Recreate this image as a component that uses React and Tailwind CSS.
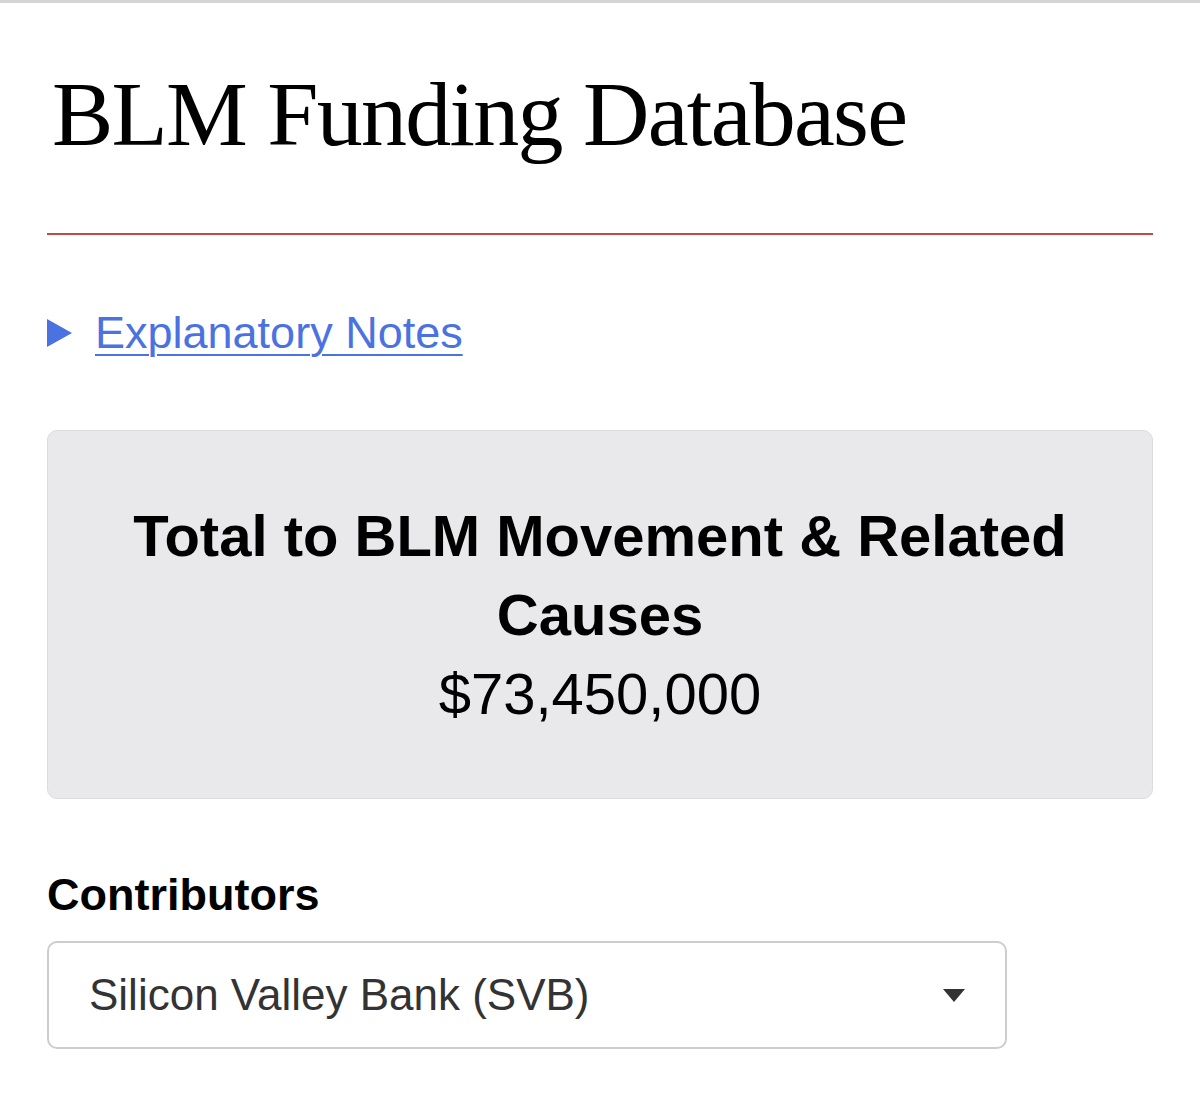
import React from "react";

// Funding page: title, notes toggle, total summary and contributor picker
const sans = { fontFamily: '"Liberation Sans", Arial, sans-serif' };
const serif = { fontFamily: '"Liberation Serif", "Times New Roman", serif' };

function SummaryBox({ label, amount }) {
  return (
    <div className="rounded-[10px] border border-[#dcdcde] bg-[#e9e9eb] px-10 pt-[65px] pb-[64px] text-center text-black" style={sans}>
      <h2 className="text-[58px] font-bold leading-[79px]">{label}</h2>
      <p className="text-[58px] leading-[80px]">{amount}</p>
    </div>
  );
}

function ContributorSelect({ value }) {
  return (
    <div className="flex h-[108px] w-[960px] items-center justify-between rounded-[10px] border-2 border-[#cdcdcf] bg-white pl-10 pr-10" style={sans}>
      <span className="text-[44px] leading-none text-[#333]">{value}</span>
      <svg width="22" height="13" viewBox="0 0 22 13">
        <path d="M0 0 H22 L11 13 Z" fill="#333" />
      </svg>
    </div>
  );
}

export default function App() {
  return (
    <div className="min-h-[1100px] w-[1200px] border-t-[3px] border-[#d4d4d6] bg-white">
      <div className="px-[47px]">
        <header className="border-b-2 border-[#c44a4a] pb-[64px] pt-[56px]">
          <h1 className="text-[92px] leading-[110px] tracking-[-1.75px] text-black pl-[5px]" style={serif}>
            BLM Funding Database
          </h1>
        </header>

        <div className="mt-[72px] flex items-center gap-[23px]" style={sans}>
          <svg width="25" height="28" viewBox="0 0 25 28">
            <path d="M0 0 L25 14 L0 28 Z" fill="#4a72e0" />
          </svg>
          <a className="text-[45px] leading-[52px] text-[#4a72e0] underline decoration-2 underline-offset-[6px]">
            Explanatory Notes
          </a>
        </div>

        <div className="mt-[71px]">
          <SummaryBox label="Total to BLM Movement & Related Causes" amount="$73,450,000" />
        </div>

        <h3 className="mt-[70px] text-[45px] font-bold leading-[52px] text-black" style={sans}>
          Contributors
        </h3>
        <div className="mt-[20px]">
          <ContributorSelect value="Silicon Valley Bank (SVB)" />
        </div>
      </div>
    </div>
  );
}
